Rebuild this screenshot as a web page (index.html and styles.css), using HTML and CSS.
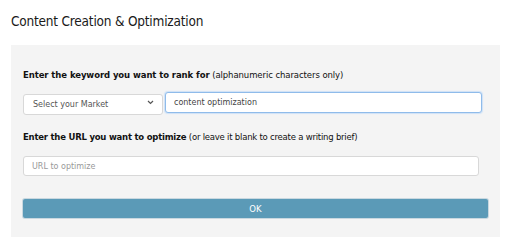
FILE: index.html
```html
<!DOCTYPE html>
<html lang="en">
<head>
    <meta charset="UTF-8">
    <meta name="viewport" content="width=device-width, initial-scale=1.0">
    <title>Content Creation &amp; Optimization</title>
    <link rel="stylesheet" href="styles.css">
</head>
<body>
    <div class="page-title">Content Creation &amp; Optimization</div>

    <div class="panel">
        <div class="field-label"><b>Enter the keyword you want to rank for</b> (alphanumeric characters only)</div>
        <div class="keyword-row">
            <div class="select-wrap">
                <select class="market">
                    <option>Select your Market</option>
                </select>
                <svg class="chevron" width="7" height="5" viewBox="0 0 7 5"><path d="M1 1 L3.5 3.5 L6 1" fill="none" stroke="#555" stroke-width="1.2"/></svg>
            </div>
            <input type="text" class="keyword focused" value="content optimization">
        </div>

        <div class="field-label second"><b>Enter the URL you want to optimize</b> (or leave it blank to create a writing brief)</div>
        <input type="text" class="url" placeholder="URL to optimize">

        <button class="ok-btn">OK</button>
    </div>
</body>
</html>
```

FILE: styles.css
```css
body {
    font-family: "DejaVu Sans", Verdana, sans-serif;
    margin: 0;
    padding: 0;
    background: #fff;
    color: #222;
}
.page-title {
    font-family: "DejaVu Sans Condensed", "DejaVu Sans", sans-serif;
    font-size: 13.5px;
    color: #1a1a1a;
    margin: 0 0 0 11px;
    padding-top: 12px;
    height: 45px;
    box-sizing: border-box;
    line-height: 18px;
    letter-spacing: -0.2px;
}
.panel {
    margin-left: 11px;
    width: 489px;
    height: 192px;
    box-sizing: border-box;
    background: #f4f4f4;
    padding: 24px 12px 0 12px;
    display: flex;
    flex-direction: column;
    align-items: flex-start;
}
.field-label {
    font-size: 8.5px;
    line-height: 12px;
    height: 12px;
    color: #111;
    margin-bottom: 11px;
    white-space: nowrap;
    letter-spacing: -0.08px;
}
.field-label.second {
    margin-top: 18px;
    margin-bottom: 13px;
    letter-spacing: -0.22px;
}
.keyword-row {
    display: flex;
    gap: 2px;
    width: 459px;
    height: 21px;
}
.select-wrap {
    position: relative;
    width: 140px;
    height: 21px;
}
.market {
    appearance: none;
    -webkit-appearance: none;
    width: 100%;
    height: 100%;
    border: 1px solid #d8d8d8;
    border-radius: 3px;
    background: #fff;
    font-family: inherit;
    font-size: 8px;
    color: #555;
    padding: 0 0 0 9px;
    margin: 0;
    outline: none;
}
.chevron {
    position: absolute;
    right: 9px;
    top: 8px;
}
input[type="text"] {
    box-sizing: border-box;
    border: 1px solid #d8d8d8;
    border-radius: 3px;
    background: #fff;
    font-family: inherit;
    font-size: 8px;
    color: #444;
    margin: 0;
    outline: none;
}
.keyword {
    flex: 1;
    height: 21px;
    padding: 0 8px;
}
.keyword.focused {
    border: 1px solid #8fbbea;
    box-shadow: 0 0 1px 1px #cfe2f7;
}
.url {
    width: 456px;
    height: 20px;
    padding: 0 8px;
}
.url::placeholder {
    color: #999;
}
.ok-btn {
    margin-top: 23px;
    width: 465px;
    height: 19px;
    border: none;
    border-radius: 2px;
    background: #5b9ab7;
    box-shadow: 0 0 0 1px #c9d8e0;
    color: #fff;
    font-family: inherit;
    font-size: 8.5px;
    padding: 0;
    cursor: pointer;
}
```
